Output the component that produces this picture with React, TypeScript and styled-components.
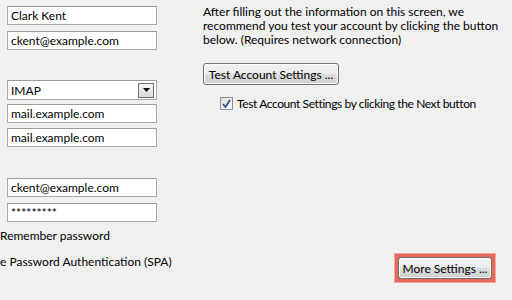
import React from 'react';
import styled, { createGlobalStyle } from 'styled-components';

const GlobalStyle = createGlobalStyle`
  html, body {
    margin: 0;
    padding: 0;
    background: #f0f0f0;
  }
  body {
    font-family: Lato, "Liberation Sans", Arial, sans-serif;
    font-size: 12px;
    color: #000;
  }
`;

const Page = styled.div`
  width: 512px;
  height: 300px;
  overflow: hidden;
  display: flex;
  background: #f0f0f0;
`;

const LeftColumn = styled.div`
  width: 203px;
  flex-shrink: 0;
  padding-left: 7px;
  display: flex;
  flex-direction: column;
  box-sizing: border-box;
`;

const RightColumn = styled.div`
  flex: 1;
  display: flex;
  flex-direction: column;
  padding-top: 5px;
`;

const TextBox = styled.div<{ $top: number }>`
  width: 150px;
  height: 19px;
  margin-top: ${(p) => p.$top}px;
  box-sizing: border-box;
  border: 1px solid #a9a9a9;
  border-top-color: #9c9c9c;
  background: #fff;
  padding: 0 3px;
  display: flex;
  align-items: center;
  white-space: nowrap;
`;

const SelectBox = styled(TextBox)`
  height: 20px;
  justify-content: space-between;
  padding-right: 2px;
`;

const DropButton = styled.div`
  width: 16px;
  height: 15px;
  box-sizing: border-box;
  border: 1px solid #707070;
  background: linear-gradient(#f4f4f4, #dcdcdc);
  display: flex;
  align-items: center;
  justify-content: center;
`;

const Label = styled.div<{ $top: number }>`
  margin-top: ${(p) => p.$top}px;
  margin-left: -7px;
  line-height: 14px;
  white-space: nowrap;
`;

const Paragraph = styled.p`
  margin: 0;
  line-height: 14px;
  width: 300px;
`;

const Button = styled.button<{ $width: number }>`
  font: inherit;
  color: #000;
  width: ${(p) => p.$width}px;
  height: 22px;
  padding: 0;
  border: 1px solid #707070;
  border-radius: 3px;
  background: linear-gradient(#f2f2f2 0%, #ebebeb 50%, #dddddd 51%, #cfcfcf 100%);
  box-shadow: inset 0 0 0 1px #fcfcfc;
`;

const TestButton = styled(Button)`
  margin-top: 16px;
`;

const CheckRow = styled.label`
  margin-top: 11px;
  margin-left: 17px;
  display: flex;
  align-items: center;
  gap: 4px;
  letter-spacing: -0.4px;
`;

const CheckBox = styled.span`
  width: 13px;
  height: 13px;
  box-sizing: border-box;
  border: 1px solid #8e8f8f;
  background: linear-gradient(135deg, #dcdcdc, #fdfdfd);
  display: flex;
  align-items: center;
  justify-content: center;
`;

const Highlight = styled.div`
  margin-top: auto;
  margin-bottom: 17px;
  margin-right: 16px;
  align-self: flex-end;
  padding: 3px;
  border: 1px solid #f4a59d;
  background: #e7695c;
  display: flex;
`;

export default function App() {
  return (
    <Page>
      <GlobalStyle />
      <LeftColumn>
        <TextBox $top={6}>Clark Kent</TextBox>
        <TextBox $top={6}>ckent@example.com</TextBox>
        <SelectBox $top={30}>
          IMAP
          <DropButton>
            <svg width="7" height="4" viewBox="0 0 7 4">
              <path d="M0 0h7L3.5 4z" fill="#000" />
            </svg>
          </DropButton>
        </SelectBox>
        <TextBox $top={4}>mail.example.com</TextBox>
        <TextBox $top={5}>mail.example.com</TextBox>
        <TextBox $top={31}>ckent@example.com</TextBox>
        <TextBox $top={6}>*********</TextBox>
        <Label $top={7}>Remember password</Label>
        <Label $top={12}>e Password Authentication (SPA)</Label>
      </LeftColumn>
      <RightColumn>
        <Paragraph>
          After filling out the information on this screen, we recommend you test your account by
          clicking the button below. (Requires network connection)
        </Paragraph>
        <TestButton $width={136}>Test Account Settings ...</TestButton>
        <CheckRow>
          <CheckBox>
            <svg width="9" height="9" viewBox="0 0 9 9">
              <path d="M1 5l2.5 3L8 1" stroke="#2b4f8c" strokeWidth="1.8" fill="none" />
            </svg>
          </CheckBox>
          Test Account Settings by clicking the Next button
        </CheckRow>
        <Highlight>
          <Button $width={94}>More Settings ...</Button>
        </Highlight>
      </RightColumn>
    </Page>
  );
}
